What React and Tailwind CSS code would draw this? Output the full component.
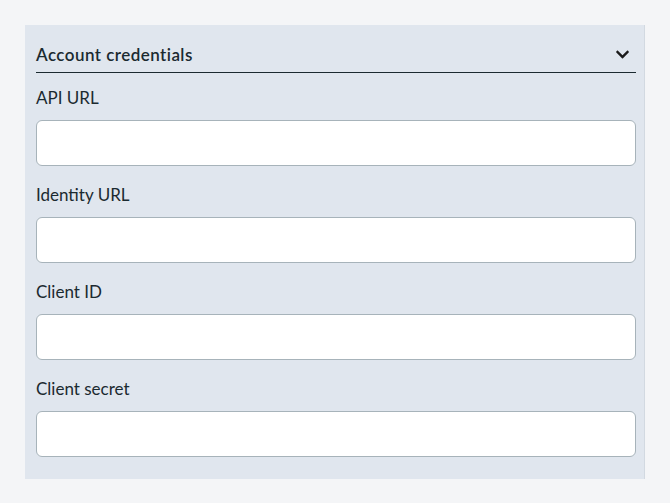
import React from "react";
import { FaChevronDown } from "react-icons/fa";

const fields = ["API URL", "Identity URL", "Client ID", "Client secret"];

export default function App() {
  return (
    <div
      className="w-[670px] h-[503px] bg-[#f4f5f7] pt-[25px] pl-[25px]"
      style={{ fontFamily: "Lato, 'Open Sans', sans-serif" }}
    >
      <div className="w-[620px] bg-[#e0e6ee] border-r border-[#d2d9e1] pl-[11px] pr-[8px] pt-[11px] pb-[22px] text-[#1b2a30]">
        <div className="h-[37px] flex items-center justify-between border-b-[1.5px] border-[#1b2a30] pt-[1px]">
          <span className="text-[17px] font-semibold tracking-[0.45px]">Account credentials</span>
          <FaChevronDown className="mr-[6px] text-[15px] text-[#1b1b1b]" />
        </div>
        <div className="flex flex-col gap-[17px] mt-[13px]">
          {fields.map((f) => (
            <div key={f} className="flex flex-col gap-[10px]">
              <label className="h-[24px] leading-[24px] text-[17px]">{f}</label>
              <input
                type="text"
                className="h-[46px] w-full bg-white border border-[#a7b3ba] rounded-[6px] outline-none"
              />
            </div>
          ))}
        </div>
      </div>
    </div>
  );
}
